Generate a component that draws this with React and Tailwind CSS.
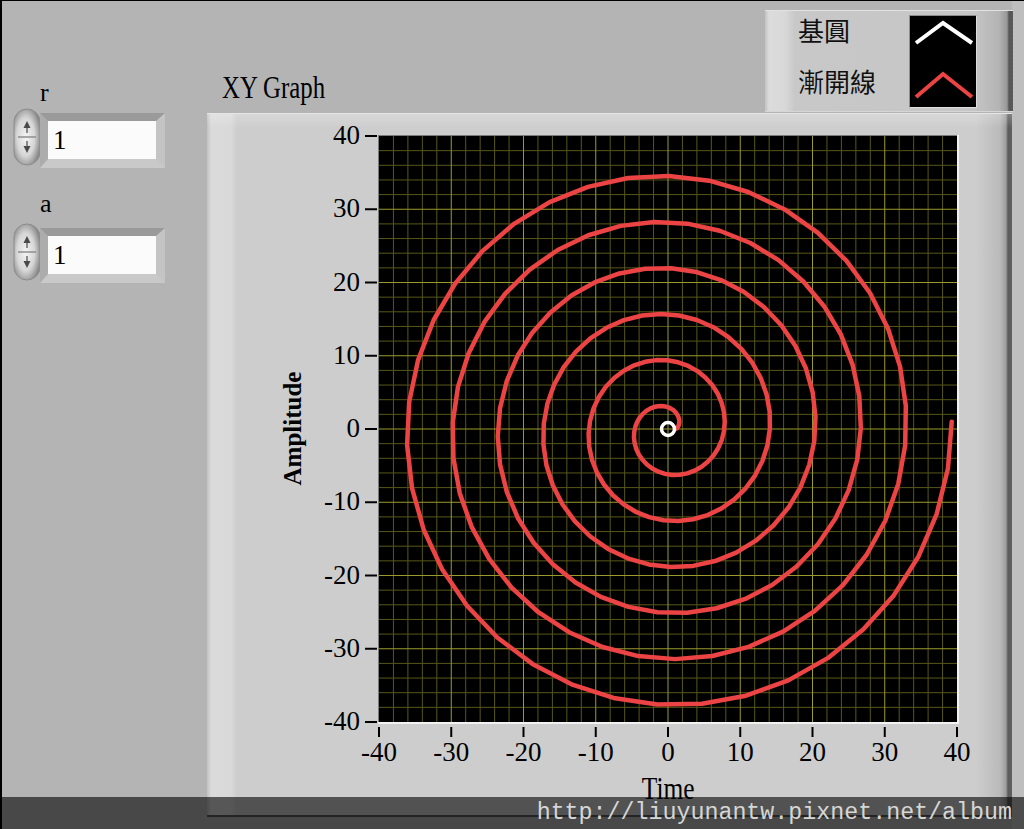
import React from "react";

const W = 578;
const H = 586;
const mx = (x) => 15 + ((x + 40) * W) / 80;
const my = (y) => 1 + ((40 - y) * H) / 80;

function spiralPath() {
  const N = 240;
  const T = 12.5 * Math.PI;
  let d = "";
  for (let i = 0; i <= N; i++) {
    const t = (T * i) / N;
    const x = Math.cos(t) + t * Math.sin(t);
    const y = Math.sin(t) - t * Math.cos(t);
    d += (i ? "L" : "M") + mx(x).toFixed(2) + " " + my(y).toFixed(2) + " ";
  }
  return d;
}

function Spin({ id }) {
  return (
    <svg width="28" height="58" viewBox="0 0 28 58" className="block shrink-0">
      <defs>
        <radialGradient id={id} cx="45%" cy="50%" r="62%">
          <stop offset="0" stopColor="#f4f4f4" />
          <stop offset="0.55" stopColor="#d6d6d6" />
          <stop offset="1" stopColor="#7c7c7c" />
        </radialGradient>
      </defs>
      <rect x="1" y="1" width="26" height="56" rx="13" fill={`url(#${id})`} stroke="#8c8c8c" strokeWidth="1" />
      <line x1="5" y1="29" x2="23" y2="29" stroke="#8e8e8e" strokeWidth="1.5" />
      <path d="M10.5 20 L14 13 L17.5 20 Z" fill="#4a4a4a" />
      <line x1="14" y1="20" x2="14" y2="25" stroke="#6a6a6a" strokeWidth="1.5" />
      <path d="M10.5 38 L14 45 L17.5 38 Z" fill="#4a4a4a" />
      <line x1="14" y1="33" x2="14" y2="38" stroke="#6a6a6a" strokeWidth="1.5" />
    </svg>
  );
}

function NumControl({ id, value }) {
  return (
    <div className="flex items-start pl-[11px]">
      <Spin id={id} />
      <div className="-ml-[1px] mt-[5px] h-[55px] w-[125px] border-t-[8px] border-l-[8px] border-r-[9px] border-b-[9px] border-t-[#9a9a9a] border-l-[#acacac] border-r-[#c4c4c4] border-b-[#c9c9c9]">
        <div className="h-full w-full bg-[#fbfbfb] pl-[5px] font-['Liberation_Serif',serif] text-[27px] leading-[38px] text-black">
          {value}
        </div>
      </div>
    </div>
  );
}

export default function App() {
  const vals = [];
  for (let v = -38; v <= 38; v += 2) vals.push(v);
  const minor = vals.filter((v) => v % 10 !== 0);
  const major = vals.filter((v) => v % 10 === 0);
  const ticks = [40, 30, 20, 10, 0, -10, -20, -30, -40];
  const xticks = [-40, -30, -20, -10, 0, 10, 20, 30, 40];

  return (
    <div className="relative flex h-[829px] w-[1024px] overflow-hidden border-l-2 border-t border-black bg-[#b4b4b4] font-['Liberation_Serif',serif] text-black">
      {/* left column: numeric controls */}
      <div className="flex w-[205px] shrink-0 flex-col pt-[79px]">
        <div className="pl-[38px] text-[26px] leading-[26px]">r</div>
        <div className="mt-[2px]">
          <NumControl id="spin-r" value="1" />
        </div>
        <div className="mt-[23px] pl-[38px] text-[26px] leading-[26px]">a</div>
        <div className="mt-[6px]">
          <NumControl id="spin-a" value="1" />
        </div>
      </div>

      {/* right column */}
      <div className="flex flex-1 flex-col bg-[linear-gradient(to_right,#b4b4b4_calc(100%_-_12px),#bebebe_calc(100%_-_12px))] pt-[9px]">
        <div className="flex items-start">
          <div className="ml-[15px] mt-[62px] inline-block origin-left scale-x-[0.8] whitespace-nowrap text-[31px] leading-[31px]">
            XY Graph
          </div>
          {/* legend */}
          <div className="ml-auto mr-[11px] flex h-[102px] w-[248px] border-t border-b border-t-[#e2e2e2] border-b-[#d6d6d6] bg-[linear-gradient(to_right,#c2c2c2_0px,#dcdcdc_4px,#d8d8d8_20px,#c8c8c8_30px,#c6c6c6_calc(100%_-_40px),#b4b4b4_calc(100%_-_14px),#989898_calc(100%_-_6px),#555555_calc(100%_-_4px),#5a5a5a_100%)]">
            <div className="flex w-[144px] shrink-0 flex-col pl-[33px] pt-[6px] font-['Noto_Sans_CJK_TC',sans-serif] text-[26px] leading-[26px] text-[#111]">
              <div>基圓</div>
              <div className="mt-[25px]">漸開線</div>
            </div>
            <div className="mt-[4px] h-[93px] w-[68px] border border-[#8c8c8c] border-r-[#dedede] border-b-[#dedede] bg-black">
              <svg width="66" height="91" viewBox="0 0 66 91" className="block">
                <path d="M6 27 L33 7 L62 27" fill="none" stroke="#ffffff" strokeWidth="4" />
                <path d="M6 81 L33 58 L62 81" fill="none" stroke="#ec4444" strokeWidth="4" />
              </svg>
            </div>
          </div>
        </div>

        {/* graph panel */}
        <div className="mr-[12px] mt-[1px] flex h-[704px] flex-col border-t border-b-2 border-t-[#e6e6e6] border-b-[#5a5a5a] bg-[linear-gradient(to_bottom,rgba(255,255,255,0.22),rgba(255,255,255,0)_14px),linear-gradient(to_right,#c0c0c0_0px,#dadada_4px,#d9d9d9_24px,#cdcdcd_30px,#cdcdcd_calc(100%_-_36px),#bababa_calc(100%_-_12px),#9c9c9c_calc(100%_-_6px),#5a5a5a_calc(100%_-_4px),#606060_100%)] pt-[8px]">
          <div className="flex items-start pl-[73px]">
            {/* y axis name */}
            <div className="flex h-[613px] w-[26px] items-center justify-center">
              <div className="-rotate-90 whitespace-nowrap text-[25px] font-bold leading-[25px]">Amplitude</div>
            </div>
            {/* y tick labels */}
            <div className="flex h-[613px] w-[54px] flex-col items-end justify-between text-[27px] leading-[27px]">
              {ticks.map((t) => (
                <div key={t}>{t}</div>
              ))}
            </div>
            {/* plot */}
            <svg width="596" height="603" viewBox="0 0 596 603" className="ml-[4px] mt-[13px] block">
              <rect x="14" y="0" width="581" height="589" fill="#000" />
              {minor.map((v) => (
                <line key={"vx" + v} x1={mx(v)} y1="1" x2={mx(v)} y2="587" stroke="#57571a" strokeWidth="1" />
              ))}
              {minor.map((v) => (
                <line key={"hy" + v} x1="15" y1={my(v)} x2="593" y2={my(v)} stroke="#57571a" strokeWidth="1" />
              ))}
              {major.map((v) => (
                <line key={"Vx" + v} x1={mx(v)} y1="1" x2={mx(v)} y2="587" stroke="#9a9a2c" strokeWidth="1" />
              ))}
              {major.map((v) => (
                <line key={"Hy" + v} x1="15" y1={my(v)} x2="593" y2={my(v)} stroke="#9a9a2c" strokeWidth="1" />
              ))}
              {/* borders */}
              <line x1="14.5" y1="0" x2="14.5" y2="589" stroke="#7a7a7a" strokeWidth="1" />
              <line x1="14" y1="0.5" x2="595" y2="0.5" stroke="#7a7a7a" strokeWidth="1" />
              <line x1="594" y1="0" x2="594" y2="589" stroke="#f2f2f2" strokeWidth="2" />
              <line x1="14" y1="588" x2="595" y2="588" stroke="#f2f2f2" strokeWidth="2" />
              {/* ticks */}
              {ticks.map((t) => (
                <line key={"ty" + t} x1="1" y1={my(t)} x2="13" y2={my(t)} stroke="#000" strokeWidth="2" />
              ))}
              {xticks.map((t) => (
                <line key={"tx" + t} x1={mx(t)} y1="592" x2={mx(t)} y2="602" stroke="#000" strokeWidth="2" />
              ))}
              {/* involute */}
              <path d={spiralPath()} fill="none" stroke="#ec4444" strokeWidth="4.5" strokeLinejoin="round" strokeLinecap="round" />
              {/* base circle */}
              <circle cx={mx(0)} cy={my(0)} r="6.5" fill="none" stroke="#ffffff" strokeWidth="3.5" />
            </svg>
          </div>
          {/* x tick labels */}
          <div className="ml-[142px] mt-[1px] flex w-[638px] justify-between text-[27px] leading-[27px]">
            {xticks.map((t) => (
              <div key={t} className="w-[60px] text-center">
                {t}
              </div>
            ))}
          </div>
          <div className="ml-[142px] mt-[7px] flex w-[638px] justify-center">
            <div className="scale-x-[0.82] text-[31px] leading-[31px]">Time</div>
          </div>
        </div>
      </div>

      {/* watermark overlay */}
      <div className="absolute bottom-0 left-0 right-0 flex h-[32px] items-center justify-end bg-black/60 pr-[12px]">
        <span className="font-['Liberation_Mono',monospace] text-[23.3px] leading-[32px] text-[#d6d6d6]">
          http://liuyunantw.pixnet.net/album
        </span>
      </div>
    </div>
  );
}
